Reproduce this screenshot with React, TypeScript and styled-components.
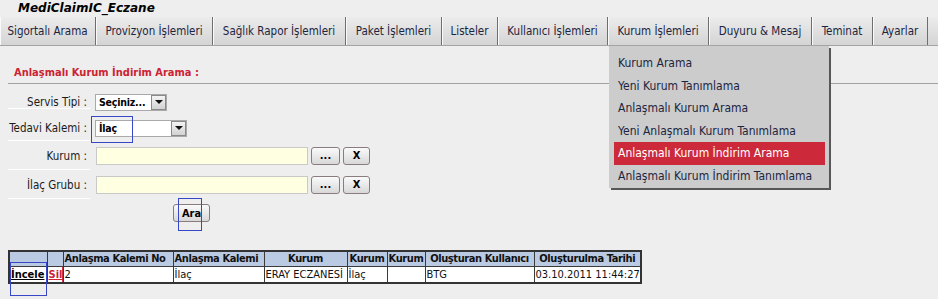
import * as React from 'react';
import styled, { createGlobalStyle } from 'styled-components';

const GlobalStyle = createGlobalStyle`
    html, body {
        margin: 0;
        padding: 0;
        background: #eeeeee;
    }
`;

const FONT = `"DejaVu Sans Condensed", "DejaVu Sans", "Liberation Sans", sans-serif`;

const Page = styled.div`
    position: relative;
    width: 938px;
    height: 299px;
    overflow: hidden;
    background: #eeeeee;
    font-family: ${FONT};
    font-stretch: condensed;
    font-size: 11px;
    color: #1b1b1b;
`;

const AppTitle = styled.div`
    height: 17px;
    padding-left: 18px;
    font-family: "DejaVu Sans", sans-serif;
    font-stretch: normal;
    font-weight: bold;
    font-style: italic;
    font-size: 12px;
    line-height: 17px;
    color: #000;
`;

const NavBar = styled.div`
    display: flex;
    height: 28px;
    border-bottom: 1px solid #a4a4a4;
    background: linear-gradient(#ececec, #d4d4d4);
`;

interface NavItemProps {
    readonly $width: number;
}

const NavItem = styled.div<NavItemProps>`
    display: flex;
    align-items: center;
    justify-content: center;
    box-sizing: border-box;
    width: ${(p) => p.$width}px;
    border-right: 1px solid #6e6e6e;
    box-shadow: inset 1px 0 0 #fafafa;
    color: #1c2540;
    font-size: 11.5px;
    white-space: nowrap;
`;

const Menu = styled.div`
    position: absolute;
    left: 609px;
    top: 46px;
    width: 220px;
    height: 142px;
    padding-top: 6px;
    box-sizing: border-box;
    background: #cccccc;
    box-shadow: 2px 2px 0 #575757;
`;

interface MenuItemProps {
    readonly $active?: boolean;
}

const MenuItem = styled.div<MenuItemProps>`
    height: 22.5px;
    line-height: 22.5px;
    margin: 0 4px 0 5px;
    padding-left: 4px;
    font-size: 12px;
    white-space: nowrap;
    color: ${(p) => (p.$active ? '#ffffff' : '#1c2540')};
    background: ${(p) => (p.$active ? '#cc2a3a' : 'transparent')};
`;

const Content = styled.div`
    margin-left: 8px;
`;

const Heading = styled.div`
    padding: 20px 0 3px 6px;
    line-height: 14px;
    border-bottom: 1px solid #a2a2a2;
    color: #cc2233;
    font-weight: bold;
    font-size: 11px;
`;

const Form = styled.div`
    padding-top: 5px;
`;

interface FormRowProps {
    readonly $height: number;
}

const FormRow = styled.div<FormRowProps>`
    display: flex;
    align-items: center;
    height: ${(p) => p.$height}px;
`;

interface LabelCellProps {
    readonly $lineUp: number;
}

const LabelCell = styled.div<LabelCellProps>`
    position: relative;
    align-self: stretch;
    display: flex;
    align-items: center;
    justify-content: flex-end;
    box-sizing: border-box;
    width: 82px;
    padding-right: 3px;
    margin-right: 5px;
    font-size: 11.5px;
    white-space: nowrap;
    &::after {
        content: '';
        position: absolute;
        left: 0;
        right: 0;
        bottom: ${(p) => p.$lineUp}px;
        height: 1px;
        background: #ffffff;
    }
`;

interface SelectBoxProps {
    readonly $width: number;
}

const SelectBox = styled.div<SelectBoxProps>`
    display: flex;
    align-items: center;
    justify-content: space-between;
    box-sizing: border-box;
    width: ${(p) => p.$width}px;
    height: 17px;
    padding: 0 0 0 3px;
    background: #ffffff;
    border: 1px solid #a9a9a9;
    font-weight: bold;
    font-size: 10.5px;
    letter-spacing: -0.2px;
    color: #000;
`;

const SelectArrow = styled.div`
    display: flex;
    align-items: center;
    justify-content: center;
    box-sizing: border-box;
    width: 15px;
    height: 15px;
    border: 1px solid #8a8a8a;
    background: linear-gradient(#f4f4f4, #d2d2d2);
    &::before {
        content: '';
        border-left: 4px solid transparent;
        border-right: 4px solid transparent;
        border-top: 4px solid #111;
    }
`;

const TextInput = styled.div`
    box-sizing: border-box;
    width: 212px;
    height: 18px;
    margin-left: 1px;
    background: #ffffe1;
    border: 1px solid #c9c9c9;
`;

interface SmallButtonProps {
    readonly $width: number;
}

const SmallButton = styled.div<SmallButtonProps>`
    display: flex;
    align-items: center;
    justify-content: center;
    box-sizing: border-box;
    width: ${(p) => p.$width}px;
    height: 18px;
    margin-left: 3px;
    border: 1px solid #8a7c7c;
    border-radius: 3px;
    background: linear-gradient(#fafafa, #d8d8d8);
    font-weight: bold;
    font-size: 11px;
    color: #000;
`;

const SearchRow = styled.div`
    padding: 5px 0 0 162px;
`;

const ResultTable = styled.table`
    margin-top: 28px;
    border-collapse: collapse;
    table-layout: fixed;
    width: 632px;
    border: 2px solid #333333;
    font-size: 11px;
`;

interface CellProps {
    readonly $align?: string;
}

const HeadCell = styled.th<CellProps>`
    height: 14px;
    padding: 0 1px;
    border: 1px solid #3a3a3a;
    background: #bacae2;
    font-weight: bold;
    font-size: 11px;
    letter-spacing: -0.4px;
    text-align: ${(p) => p.$align || 'center'};
    white-space: nowrap;
    overflow: hidden;
    line-height: 14px;
    color: #111;
`;

const BodyCell = styled.td`
    height: 15px;
    padding: 0 1px;
    border: 1px solid #3a3a3a;
    background: #ffffff;
    white-space: nowrap;
    overflow: hidden;
    line-height: 15px;
    color: #111;
`;

interface RowLinkProps {
    readonly $danger?: boolean;
}

const RowLink = styled.a<RowLinkProps>`
    font-weight: bold;
    text-decoration: underline;
    color: ${(p) => (p.$danger ? '#cc2233' : '#000000')};
`;

const DangerCell = styled(BodyCell)`
    box-shadow: inset -1px 0 0 #d03040;
`;

interface FocusBoxProps {
    readonly $x: number;
    readonly $y: number;
    readonly $w: number;
    readonly $h: number;
}

const FocusBox = styled.div<FocusBoxProps>`
    position: absolute;
    left: ${(p) => p.$x}px;
    top: ${(p) => p.$y}px;
    width: ${(p) => p.$w}px;
    height: ${(p) => p.$h}px;
    border: 1px solid #3846c8;
    pointer-events: none;
`;

const navItems: Array<[string, number]> = [
    ['Sigortalı Arama', 96],
    ['Provizyon İşlemleri', 117],
    ['Sağlık Rapor İşlemleri', 133],
    ['Paket İşlemleri', 96],
    ['Listeler', 56],
    ['Kullanıcı İşlemleri', 110],
    ['Kurum İşlemleri', 101],
    ['Duyuru & Mesaj', 103],
    ['Teminat', 61],
    ['Ayarlar', 55],
];

const menuItems = [
    'Kurum Arama',
    'Yeni Kurum Tanımlama',
    'Anlaşmalı Kurum Arama',
    'Yeni Anlaşmalı Kurum Tanımlama',
    'Anlaşmalı Kurum İndirim Arama',
    'Anlaşmalı Kurum İndirim Tanımlama',
];

const columnWidths = [38, 16, 110, 91, 83, 40, 38, 109, 107];

export default function App() {
    return (
        <Page>
            <GlobalStyle />
            <AppTitle>MediClaimIC_Eczane</AppTitle>
            <NavBar>
                {navItems.map(([label, width]) => (
                    <NavItem key={label} $width={width}>{label}</NavItem>
                ))}
            </NavBar>

            <Content>
                <Heading>Anlaşmalı Kurum İndirim Arama :</Heading>
                <Form>
                    <FormRow $height={26}>
                        <LabelCell $lineUp={6}>Servis Tipi :</LabelCell>
                        <SelectBox $width={72}>
                            Seçiniz...
                            <SelectArrow />
                        </SelectBox>
                    </FormRow>
                    <FormRow $height={26}>
                        <LabelCell $lineUp={0}>Tedavi Kalemi :</LabelCell>
                        <SelectBox $width={92}>
                            İlaç
                            <SelectArrow />
                        </SelectBox>
                    </FormRow>
                    <FormRow $height={29}>
                        <LabelCell $lineUp={0}>Kurum :</LabelCell>
                        <TextInput />
                        <SmallButton $width={29}>...</SmallButton>
                        <SmallButton $width={27}>X</SmallButton>
                    </FormRow>
                    <FormRow $height={29}>
                        <LabelCell $lineUp={0}>İlaç Grubu :</LabelCell>
                        <TextInput />
                        <SmallButton $width={29}>...</SmallButton>
                        <SmallButton $width={27}>X</SmallButton>
                    </FormRow>
                </Form>
                <SearchRow>
                    <SmallButton $width={37}>Ara</SmallButton>
                </SearchRow>

                <ResultTable>
                    <colgroup>
                        {columnWidths.map((w, i) => <col key={i} style={{ width: w }} />)}
                    </colgroup>
                    <thead>
                        <tr>
                            <HeadCell />
                            <HeadCell />
                            <HeadCell $align="left">Anlaşma Kalemi No</HeadCell>
                            <HeadCell $align="left">Anlaşma Kalemi</HeadCell>
                            <HeadCell>Kurum</HeadCell>
                            <HeadCell>Kurum</HeadCell>
                            <HeadCell>Kurum</HeadCell>
                            <HeadCell>Oluşturan Kullanıcı</HeadCell>
                            <HeadCell>Oluşturulma Tarihi</HeadCell>
                        </tr>
                    </thead>
                    <tbody>
                        <tr>
                            <BodyCell><RowLink>İncele</RowLink></BodyCell>
                            <DangerCell><RowLink $danger={true}>Sil</RowLink></DangerCell>
                            <BodyCell>2</BodyCell>
                            <BodyCell>İlaç</BodyCell>
                            <BodyCell>ERAY ECZANESİ</BodyCell>
                            <BodyCell>İlaç</BodyCell>
                            <BodyCell />
                            <BodyCell>BTG</BodyCell>
                            <BodyCell>03.10.2011 11:44:27</BodyCell>
                        </tr>
                    </tbody>
                </ResultTable>
            </Content>

            <Menu>
                {menuItems.map((item) => (
                    <MenuItem key={item} $active={item === 'Anlaşmalı Kurum İndirim Arama'}>{item}</MenuItem>
                ))}
            </Menu>

            <FocusBox $x={91} $y={116} $w={40} $h={25} />
            <FocusBox $x={178} $y={198} $w={22} $h={31} />
            <FocusBox $x={10} $y={262} $w={35} $h={32} />
        </Page>
    );
}
